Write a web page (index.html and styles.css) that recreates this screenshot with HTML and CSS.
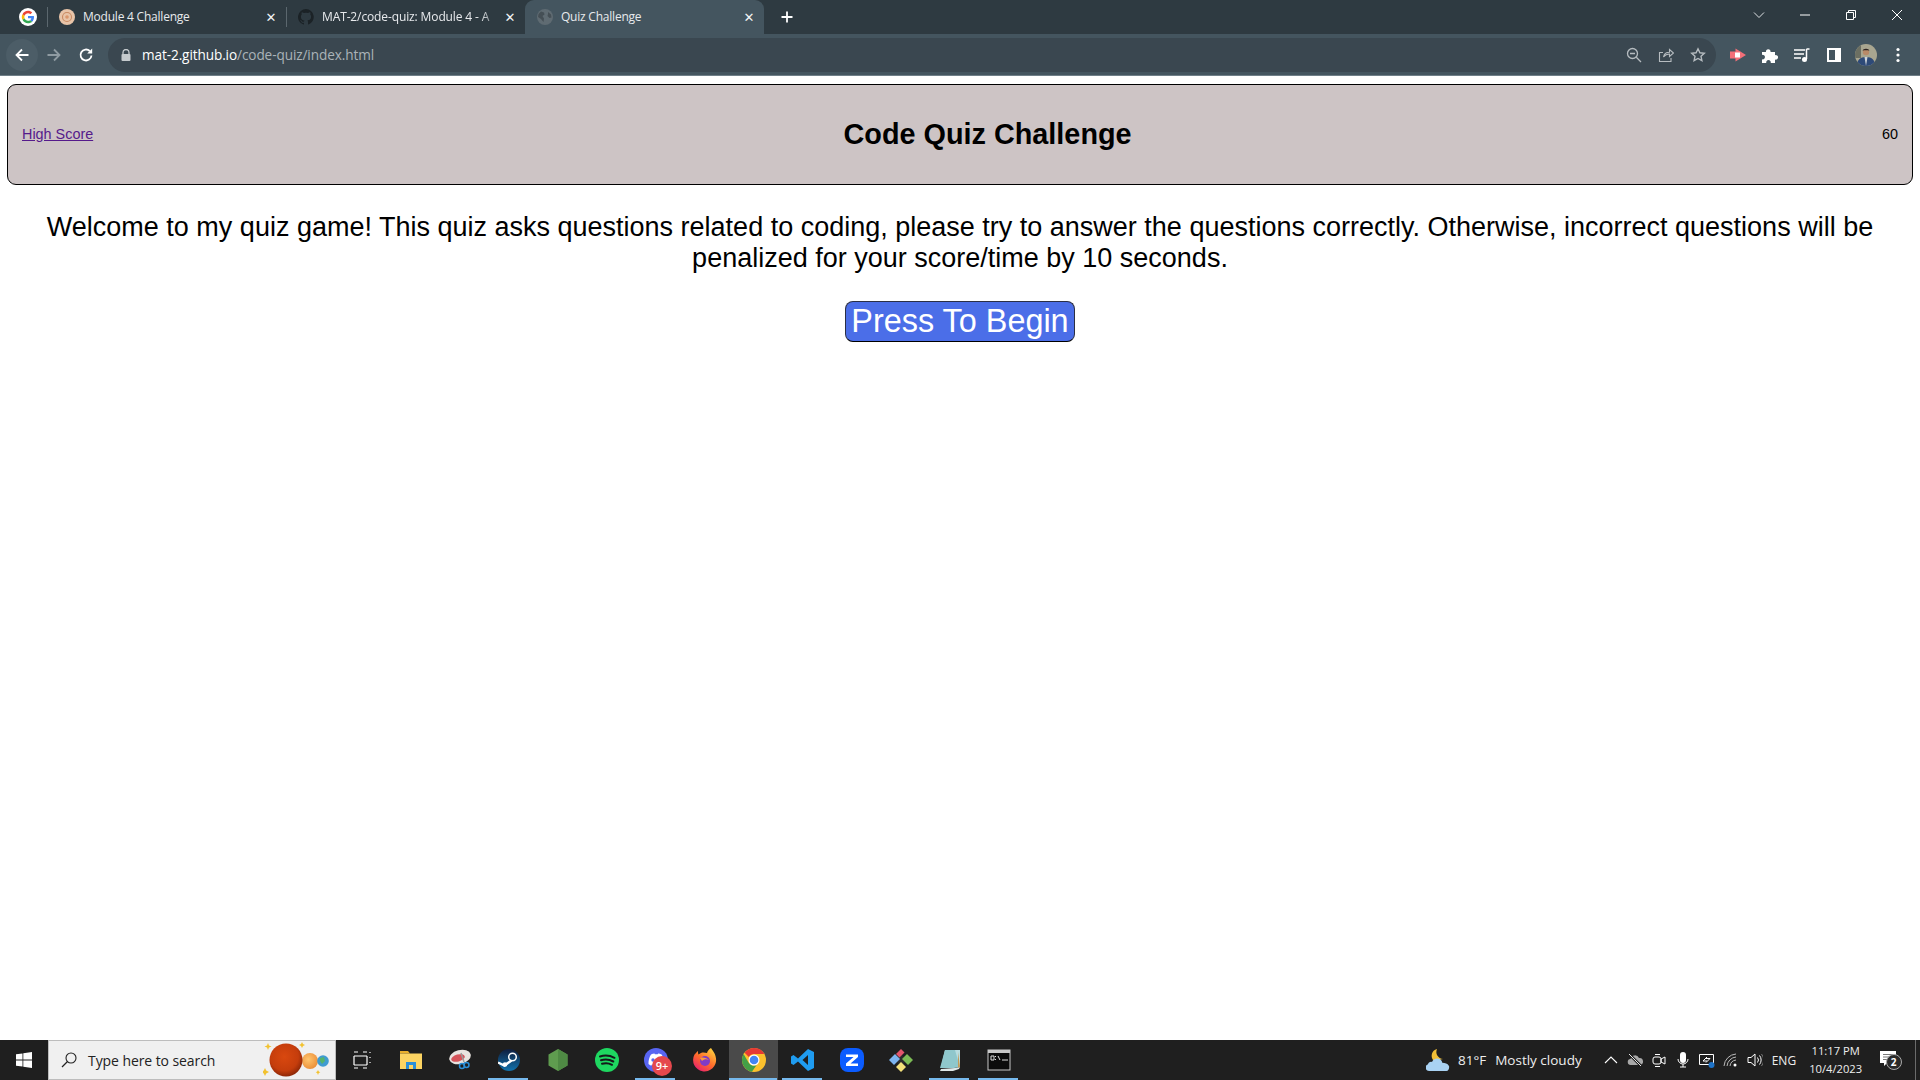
FILE: index.html
```html
<!DOCTYPE html>
<html lang="en">
<head>
<meta charset="utf-8">
<title>Quiz Challenge</title>
<link rel="stylesheet" href="styles.css">
</head>
<body>
<div class="screen">
  <div class="tabstrip">
    <div class="pinned">
      <svg class="fav18" viewBox="0 0 24 24"><circle cx="12" cy="12" r="12" fill="#fff"/><path d="M20 12.2c0-.6 0-1.100-.2-1.700H12v3.200h4.500c-.2 1-.8 1.900-1.700 2.500l2.700 2.100c1.600-1.500 2.500-3.600 2.500-6.100z" fill="#4285f4"/><path d="M12 20.300c2.200 0 4.100-.7 5.500-2l-2.700-2.100c-.8.5-1.700.8-2.800.8-2.100 0-3.900-1.400-4.600-3.400l-2.800 2.200c1.400 2.700 4.200 4.500 7.400 4.500z" fill="#34a853"/><path d="M7.400 13.600c-.4-1.100-.4-2.200 0-3.200L4.600 8.200c-1.200 2.300-1.200 5.200 0 7.600z" fill="#fbbc05"/><path d="M12 7c1.200 0 2.300.4 3.200 1.300l2.400-2.400C16.100 4.500 14.200 3.700 12 3.700c-3.200 0-6 1.800-7.400 4.500l2.800 2.200C8.100 8.400 9.900 7 12 7z" fill="#ea4335"/></svg>
    </div>
    <div class="tab-sep"></div>
    <div class="tab">
      <svg class="fav16" viewBox="0 0 16 16"><circle cx="8" cy="8" r="8" fill="#e8c4a8"/><circle cx="8" cy="8" r="4.500" fill="none" stroke="#c98a62" stroke-width="1.100"/><circle cx="8" cy="8" r="1.800" fill="#d9966c"/></svg>
      <span class="tab-title">Module 4 Challenge</span>
      <span class="tab-x">✕</span>
    </div>
    <div class="tab-sep"></div>
    <div class="tab">
      <svg class="fav16" viewBox="0 0 16 16"><path fill="#1b2226" d="M8 0a8 8 0 0 0-2.500 15.600c.4.100.5-.2.500-.4v-1.400c-2.200.5-2.700-1-2.700-1-.4-.9-.9-1.200-.9-1.200-.7-.5.100-.5.100-.5.800.100 1.200.8 1.200.8.700 1.200 1.900.9 2.300.7.100-.5.300-.9.500-1.100-1.800-.2-3.600-.9-3.600-4 0-.9.300-1.600.8-2.100-.1-.2-.4-1 .1-2.100 0 0 .7-.2 2.200.8a7.600 7.600 0 0 1 4 0c1.500-1 2.200-.8 2.200-.8.400 1.100.2 1.900.1 2.100.5.600.8 1.300.8 2.100 0 3.100-1.900 3.700-3.700 3.900.3.300.6.700.6 1.500v2.200c0 .2.100.5.500.4A8 8 0 0 0 8 0z"/></svg>
      <span class="tab-title tab-fade">MAT-2/code-quiz: Module 4 - A</span>
      <span class="tab-x">✕</span>
    </div>
    <div class="tab tab-active">
      <svg class="fav16" viewBox="0 0 16 16"><circle cx="8" cy="8" r="8" fill="#5f6b72"/><path d="M4 2.500l3 1 .5 2-2 1.500 1.500 2.500-.5 3.500-2.500-3L1 8l.5-3zM11 3l3 2.500.5 3-2 .5-2-2 .5-2z" fill="#454f55"/></svg>
      <span class="tab-title">Quiz Challenge</span>
      <span class="tab-x">✕</span>
    </div>
    <span class="newtab">
      <svg class="ic16" viewBox="0 0 16 16"><path d="M8 2.500v11M2.500 8h11" stroke="#fff" stroke-width="1.800" fill="none"/></svg>
    </span>
    <div class="winctl">
      <span class="winbtn"><svg class="ic12" viewBox="0 0 12 12"><path d="M1 3.500l5 5 5-5" stroke="#dfe3e5" fill="none"/></svg></span>
      <span class="winbtn"><svg class="ic12" viewBox="0 0 12 12"><path d="M1 6h10" stroke="#fff" fill="none"/></svg></span>
      <span class="winbtn"><svg class="ic12" viewBox="0 0 12 12"><path d="M1.500 3.500h7v7h-7zM3.500 3.500v-2h7v7h-2" stroke="#fff" fill="none"/></svg></span>
      <span class="winbtn"><svg class="ic12" viewBox="0 0 12 12"><path d="M1 1l10 10M11 1L1 11" stroke="#fff" fill="none"/></svg></span>
    </div>
  </div>

  <div class="toolbar">
    <div class="navs">
      <span class="navbtn nav-hover"><svg class="ic16" viewBox="0 0 16 16"><path d="M14.500 8H2.500M8 2.500L2.500 8 8 13.500" stroke="#fff" stroke-width="1.800" fill="none"/></svg></span>
      <span class="navbtn"><svg class="ic16" viewBox="0 0 16 16"><path d="M1.500 8h12M8 2.500L13.500 8 8 13.500" stroke="#8f9ba2" stroke-width="1.800" fill="none"/></svg></span>
      <span class="navbtn"><svg class="ic16" viewBox="0 0 16 16"><path d="M13.500 8.500A5.500 5.500 0 1 1 11.800 4" stroke="#fff" stroke-width="1.800" fill="none"/><path d="M14.200 1.500v5h-5z" fill="#fff"/></svg></span>
    </div>
    <div class="omnibox">
      <svg class="lock" viewBox="0 0 10 12"><path d="M2 5V3.500a3 3 0 0 1 6 0V5" stroke="#c5cacd" stroke-width="1.300" fill="none"/><rect x="0.500" y="5" width="9" height="7" rx="1" fill="#c5cacd"/></svg>
      <span class="url"><span class="url-host">mat-2.github.io</span>/code-quiz/index.html</span>
      <span class="omni-actions">
        <span class="omni-btn"><svg class="ic16" viewBox="0 0 16 16"><circle cx="6.500" cy="6.500" r="5" stroke="#b6bcc0" stroke-width="1.300" fill="none"/><path d="M4 6.500h5M10.300 10.300l4.700 4.700" stroke="#b6bcc0" stroke-width="1.300" fill="none"/></svg></span>
        <span class="omni-btn"><svg class="ic16" viewBox="0 0 16 16"><path d="M5.500 10c.5-3 3-4.800 6-4.800V2.500L15.500 6l-4 3.500V7c-2.500 0-4.500 1-6 3zM13 11v3.500H1.500V5.500H5" stroke="#b6bcc0" stroke-width="1.100" fill="none"/></svg></span>
        <span class="omni-btn"><svg class="ic16" viewBox="0 0 16 16"><path d="M8 1.800l1.900 4 4.400.5-3.300 3 .9 4.400L8 11.500l-3.900 2.200.9-4.400-3.300-3 4.400-.5z" stroke="#b6bcc0" stroke-width="1.400" fill="none"/></svg></span>
      </span>
    </div>
    <div class="tools">
      <span class="tool"><svg class="ic16" viewBox="0 0 16 16"><path d="M0 4.500h5.500V1.500L16 8 5.500 14.500v-3H0z" fill="#f36f78"/><rect x="5" y="5.500" width="5" height="5" fill="#fff"/></svg></span>
      <span class="tool"><svg class="ic16" viewBox="0 0 16 16"><path d="M0 5h4a2.300 2.300 0 1 1 4.500 0H13v3.200a2.300 2.300 0 1 1 0 4.300V16H8.700a2.300 2.300 0 1 0-4.400 0H0v-3.700a2.300 2.300 0 1 0 0-4.400z" fill="#fff"/></svg></span>
      <span class="tool"><svg class="ic16" viewBox="0 0 16 16"><path d="M0 3h11M0 7h10M0 11h7" stroke="#fff" stroke-width="1.300" fill="none"/><path d="M12.500 2h3M12.500 2v10" stroke="#fff" stroke-width="1.500" fill="none"/><circle cx="10.500" cy="12.500" r="2.500" fill="#fff"/></svg></span>
      <span class="tool"><svg class="ic16" viewBox="0 0 16 16"><path fill="#fff" fill-rule="evenodd" d="M1 1h14v14H1zM3 3v10h6V3z"/></svg></span>
      <span class="avatar"><svg class="ic22" viewBox="0 0 22 22"><defs><clipPath id="av"><circle cx="11" cy="11" r="11"/></clipPath></defs><g clip-path="url(#av)"><rect width="22" height="22" fill="#a9a690"/><rect x="0" y="0" width="6" height="14" fill="#6c6f62"/><path d="M2 22c0-6 3-9 9-9s9 3 9 9z" fill="#2e4a78"/><path d="M9.500 13l1.500 9 1.500-9z" fill="#cdd2d8"/><circle cx="11" cy="8" r="3.200" fill="#b98a68"/><path d="M7.700 7c0-3 6.600-3 6.600 0l-1-.8h-4.600z" fill="#2c2421"/></g></svg></span>
      <span class="tool"><svg class="ic16" viewBox="0 0 16 16"><circle cx="8" cy="2.500" r="1.600" fill="#fff"/><circle cx="8" cy="8" r="1.600" fill="#fff"/><circle cx="8" cy="13.500" r="1.600" fill="#fff"/></svg></span>
    </div>
  </div>

  <main class="page">
    <header class="card">
      <a class="score-link" href="#">High Score</a>
      <h1 class="title">Code Quiz Challenge</h1>
      <div class="timer">60</div>
    </header>
    <p class="intro">Welcome to my quiz game! This quiz asks questions related to coding, please try to answer the questions correctly. Otherwise, incorrect questions will be penalized for your score/time by 10 seconds.</p>
    <div class="start-row"><button class="start">Press To Begin</button></div>
  </main>

  <footer class="taskbar">
    <span class="start-menu"><svg class="ic16" viewBox="0 0 16 16"><path fill="#fff" d="M0 2.300l6.500-.9v6.200H0zM7.300 1.300L16 0v7.600H7.300zM0 8.400h6.500v6.200L0 13.700zM7.300 8.400H16V16l-8.700-1.200z"/></svg></span>
    <div class="search">
      <svg class="ic16" viewBox="0 0 16 16"><circle cx="10" cy="6" r="5" stroke="#222" stroke-width="1.100" fill="none"/><path d="M6.500 9.500L1 15" stroke="#222" stroke-width="1.300" fill="none"/></svg>
      <span class="search-text">Type here to search</span>
      <svg class="search-art" viewBox="0 0 70 40"><defs><radialGradient id="planet" cx="0.450" cy="0.400" r="0.650"><stop offset="0" stop-color="#d9480f"/><stop offset="0.650" stop-color="#c53d0c"/><stop offset="1" stop-color="#7f2206"/></radialGradient><radialGradient id="moon" cx="0.400" cy="0.400" r="0.700"><stop offset="0" stop-color="#ffc56e"/><stop offset="1" stop-color="#ea8a34"/></radialGradient></defs><path d="M5 3l1 2.500 2.500 1-2.500 1L5 10 4 7.500l-2.500-1 2.500-1zM39 2l1 2 2 1-2 1-1 2-1-2-2-1 2-1zM2 28l1.200 2.500L6 32l-2.800 1.500L2 36 .8 33.500-2 32l2.800-1.500zM55 30l.8 1.500 1.500.8-1.500.7L55 35l-.8-2-1.500-.7 1.500-.8z" fill="#f2c230"/><circle cx="47" cy="21" r="8" fill="url(#moon)"/><circle cx="60" cy="21" r="5.800" fill="#3f9bd1"/><path d="M57 18l4-1 1 4-3 3-2-3z" fill="#54b36c"/><circle cx="23" cy="20" r="16.500" fill="url(#planet)"/></svg>
    </div>
    <div class="apps">
      <span class="app"><svg class="ic18" viewBox="0 0 18 18"><path d="M1 1h4M1 5h13M1 5v9M14 5v9M1 14h13M1 17h4M10 1h4M10 17h4M17 1v1M17 6v1M17 11v1" stroke="#fff" stroke-width="1.200" fill="none"/></svg></span>
      <span class="app"><svg class="ic22" viewBox="0 0 22 22"><path d="M0 2h8l2 2.500H0z" fill="#eab02c"/><path d="M0 4.500h22V20H0z" fill="#fcd462"/><path d="M6 13h10v7H6z" fill="#2a8fd8"/><path d="M9 16h4v4H9z" fill="#fcd462"/></svg></span>
      <span class="app"><svg class="ic22" viewBox="0 0 22 22"><ellipse cx="11" cy="8" rx="11" ry="7" fill="#e9e4e0" transform="rotate(-15 11 8)"/><ellipse cx="9" cy="9" rx="7" ry="3.500" fill="#d6545a" transform="rotate(-15 9 9)"/><path d="M12 4l3 9" stroke="#999" stroke-width="1.500"/><circle cx="13" cy="17" r="2.500" stroke="#2a8fd8" stroke-width="1.500" fill="none"/><circle cx="17.500" cy="16" r="2.500" stroke="#2a8fd8" stroke-width="1.500" fill="none"/></svg></span>
      <span class="app app-on"><svg class="ic22" viewBox="0 0 22 22"><defs><linearGradient id="st" x1="0" y1="0" x2="0" y2="1"><stop offset="0" stop-color="#0f1d3d"/><stop offset="1" stop-color="#1273ad"/></linearGradient></defs><circle cx="11" cy="11" r="11" fill="url(#st)"/><path d="M0 13.500l6.500 3 7-5" stroke="#fff" stroke-width="2.400" fill="none"/><circle cx="14.500" cy="8" r="3.800" fill="none" stroke="#fff" stroke-width="1.500"/><circle cx="7" cy="15.500" r="2.300" fill="#fff"/></svg></span>
      <span class="app"><svg class="ic22" viewBox="0 0 22 22"><path d="M11 0l9.500 5.500v11L11 22l-9.500-5.500v-11z" fill="#5f9c4f"/><path d="M11 0l9.500 5.500v11L11 22z" fill="#4f8a44"/></svg></span>
      <span class="app"><svg class="ic24" viewBox="0 0 24 24"><circle cx="12" cy="12" r="12" fill="#1ed760"/><path d="M5 8.500c5-1.500 10-1 14.500 1.300M6 12.300c4.200-1.200 8.500-.8 12.300 1.200M7 15.800c3.500-1 7-.7 10 1" stroke="#15181a" stroke-width="2" stroke-linecap="round" fill="none"/></svg></span>
      <span class="app app-on"><svg class="ic24" viewBox="0 0 24 24"><circle cx="12" cy="12" r="12" fill="#5865f2"/><path d="M4.500 16c-.2-3.500.8-7 2.500-9.500 1.200-.6 2.400-.9 3.500-1l.4.800c1-.1 1.800-.1 2.800 0l.4-.8c1.200.1 2.300.4 3.500 1 1.700 2.500 2.700 6 2.500 9.500-1.300 1-2.500 1.500-3.800 1.800l-.8-1.300c-2.800.8-4.700.8-7.500 0l-.8 1.300C7 17.500 5.800 17 4.500 16z" fill="#fff"/><circle cx="9" cy="12" r="1.700" fill="#5865f2"/><circle cx="15" cy="12" r="1.700" fill="#5865f2"/></svg><span class="badge">9+</span></span>
      <span class="app"><svg class="ic24" viewBox="0 0 24 24"><defs><linearGradient id="ff" x1="0.800" y1="0" x2="0.100" y2="1"><stop offset="0" stop-color="#ffd13d"/><stop offset="0.500" stop-color="#ff6a2b"/><stop offset="1" stop-color="#e5147a"/></linearGradient></defs><path d="M18 0c1 2 4.500 5 5 10.500A11.500 11.500 0 1 1 1.500 6.500C3 5 4 3.500 5 3c-.2 1.500 0 2.500.5 3.500C8 4 11 4 14 5c.5-2 2-4 4-5z" fill="url(#ff)"/><circle cx="12" cy="13" r="5" fill="#7f3bc7"/><path d="M7 10c3-1 7 0 9 2-2-1-5-1-7 1z" fill="#ff9a3c"/></svg></span>
      <span class="app app-current"><svg class="ic24" viewBox="0 0 24 24"><circle cx="12" cy="12" r="12" fill="#fbc02d"/><path d="M12 0a12 12 0 0 1 10.400 6H12a6 6 0 0 0-5.200 3L2.600 4.800A12 12 0 0 1 12 0z" fill="#e53935"/><path d="M1.600 6a12 12 0 0 0 8.300 17.800L14.700 17A6 6 0 0 1 6.800 15z" fill="#43a047"/><circle cx="12" cy="12" r="5.500" fill="#fff"/><circle cx="12" cy="12" r="4.300" fill="#4285f4"/></svg></span>
      <span class="app app-on"><svg class="ic24" viewBox="0 0 24 24"><path d="M17 1l6 3v16l-6 3-10-9.500L2.500 17 0 15.500V8.500L2.500 7 7 10.500zM17 7l-5.500 5 5.500 5z" fill="#1f9cf0" fill-rule="evenodd"/></svg></span>
      <span class="app"><svg class="ic24" viewBox="0 0 24 24"><rect width="24" height="24" rx="8" fill="#0b5cff"/><path d="M6 6.500h12v2.500l-7.500 6.500H18V18H6v-2.500l7.500-6.500H6z" fill="#fff"/></svg></span>
      <span class="app"><svg class="ic24" viewBox="0 0 24 24"><path d="M12 6l6 6-6 6-6-6z" fill="#2b2b2b"/><path d="M7 6l5-5 3.500 3.500-5 5z" fill="#e2566c"/><path d="M0 12l6-6 5 5-6 6z" fill="#7db4f0"/><path d="M18 6l6 6-5 5-6-6z" fill="#7cbb55"/><path d="M12 24l-5-5 5-5 5 5z" fill="#f3e07a"/></svg></span>
      <span class="app app-on"><svg class="ic24" viewBox="0 0 24 24"><path d="M7 2h15v17H3z" fill="#b8dde0"/><path d="M7 2L2 20h14l6-1-5-17z" fill="#8fc7cc"/><path d="M3 21l14-1 5-1-1 2-6 2H2z" fill="#dfe7e8"/><path d="M20 4l2 15-2 .5z" fill="#c49a55"/></svg></span>
      <span class="app app-on"><svg class="ic24" viewBox="0 0 24 24"><rect x="1" y="2" width="22" height="20" fill="#0c0c0c" stroke="#c8c8c8"/><rect x="1" y="2" width="22" height="3" fill="#c8c8c8"/><path d="M4 8h3v4H4zM8.500 8v1M8.500 11v1M11 8l2 4M15 12h6" stroke="#ddd" fill="none"/></svg></span>
    </div>
    <div class="tray">
      <svg class="ic24" viewBox="0 0 24 24"><path d="M11 1a7 7 0 0 0-3 12l9-2a7 7 0 0 1-6-10z" fill="#f2c037"/><path d="M3 23a3.500 3.500 0 0 1-1-6.800c.3-2 2.500-3 4-2.300C7 11.500 9.500 10 12 10.500c2.500.4 4 2.200 4.300 4.300 3 0 5 .6 6.700 3.200.6 2-.5 5-2.500 5z" fill="#a9d2f3"/></svg>
      <span class="tray-temp">81°F</span>
      <span class="tray-weather">Mostly cloudy</span>
      <span class="tray-icons">
        <span class="tray-i"><svg class="ic16" viewBox="0 0 16 16"><path d="M2 11l6-6 6 6" stroke="#fff" stroke-width="1.100" fill="none"/></svg></span>
        <span class="tray-i"><svg class="ic16" viewBox="0 0 16 16"><path d="M4 13a3 3 0 0 1-.5-6 4.500 4.500 0 0 1 8.500-1 3.500 3.500 0 0 1 1 7z" fill="#a8a8a8"/><path d="M2 2l12 12" stroke="#1f1f1f" stroke-width="2.500"/><path d="M2 2l12 12" stroke="#e8e8e8"/></svg></span>
        <span class="tray-i"><svg class="ic16" viewBox="0 0 16 16"><rect x="2" y="5" width="8" height="7" rx="2" stroke="#fff" fill="none"/><path d="M10 7l4-2v7l-4-2zM4 2.500h5M4 14.500h5" stroke="#fff" fill="none"/></svg></span>
        <span class="tray-i"><svg class="ic16" viewBox="0 0 16 16"><rect x="5" y="0" width="6" height="11" rx="3" fill="#fff"/><path d="M3 7a5 5 0 0 0 10 0M8 12v3M5 15h6" stroke="#fff" fill="none"/></svg></span>
        <span class="tray-i"><svg class="ic16" viewBox="0 0 16 16"><path d="M.5 2.500h14v10H.5z" stroke="#fff" fill="none"/><path d="M8 5L4 9h4M7 10.500l4-4H7" stroke="#fff" fill="none"/><circle cx="12.500" cy="13" r="3" fill="#1e73c8"/></svg></span>
        <span class="tray-i"><svg class="ic16" viewBox="0 0 16 16"><path d="M1 14a13 13 0 0 1 12-12M4 14a10 10 0 0 1 9-9M7 14a7 7 0 0 1 6-6" stroke="#bbb" fill="none"/><circle cx="12" cy="13" r="1.500" fill="#fff"/></svg></span>
        <span class="tray-i"><svg class="ic16" viewBox="0 0 16 16"><path d="M1 5.500h3L8 2v12L4 10.500H1z" stroke="#fff" fill="none"/><path d="M10.500 5.500a4 4 0 0 1 0 5M12.500 3.500a7 7 0 0 1 0 9" stroke="#fff" fill="none"/><path d="M14.500 2a10 10 0 0 1 0 12" stroke="#777" fill="none"/></svg></span>
      </span>
      <span class="tray-lang">ENG</span>
      <span class="clock"><span>11:17 PM</span><span>10/4/2023</span></span>
      <span class="notif"><svg class="ic24" viewBox="0 0 24 24"><path d="M1 3h16v12H8l-3 3v-3H1z" fill="#fff"/><path d="M4 6.500h10M4 9h10M4 11.500h7" stroke="#777"/></svg><span class="notif-n">2</span></span>
      <span class="show-desktop"></span>
    </div>
  </footer>
</div>
</body>
</html>
```

FILE: styles.css
```css
* { box-sizing: border-box; }
html, body { margin: 0; height: 100%; }
body { font-family: "Liberation Sans", Arial, sans-serif; background: #fff; color: #000; overflow: hidden; }
svg { display: block; flex: none; }
.screen { height: 100vh; display: flex; flex-direction: column; }

.fav16, .ic16 { width: 16px; height: 16px; }
.fav18, .ic18 { width: 18px; height: 18px; }
.ic12 { width: 12px; height: 12px; }
.ic22 { width: 22px; height: 22px; }
.ic24 { width: 24px; height: 24px; }

/* browser chrome */
.tabstrip { height: 34px; background: #2e3a41; display: flex; align-items: center; font-family: "Open Sans", sans-serif; flex: none; }
.pinned { width: 47px; height: 34px; padding-left: 19px; display: flex; align-items: center; }
.tab-sep { width: 1px; height: 20px; background: #5b676e; flex: none; }
.tab { width: 238px; height: 34px; padding: 0 7px 0 11px; display: flex; align-items: center; color: #e8eaed; }
.tab-active { background: #44555f; border-radius: 9px 9px 0 0; width: 239px; padding-left: 12px; }
.tab-title { flex: 1; margin-left: 8px; padding-bottom: 2px; font-size: 12px; white-space: nowrap; overflow: hidden; letter-spacing: -0.22px; }
.tab-fade { -webkit-mask-image: linear-gradient(to right, #000 88%, transparent 100%); mask-image: linear-gradient(to right, #000 88%, transparent 100%); letter-spacing: -0.12px; }
.tab-x { width: 16px; font-size: 13px; text-align: center; color: #f1f3f4; font-family: "DejaVu Sans", sans-serif; }
.newtab { width: 46px; display: flex; justify-content: center; }
.winctl { margin-left: auto; display: flex; }
.winbtn { width: 46px; height: 30px; display: flex; align-items: center; justify-content: center; margin-bottom: 4px; }

.toolbar { height: 42px; background: #44555f; display: flex; align-items: center; border-bottom: 1px solid #6f7f88; flex: none; }
.navs { display: flex; width: 108px; padding-left: 6px; }
.navbtn { width: 32px; height: 32px; display: flex; align-items: center; justify-content: center; border-radius: 50%; }
.nav-hover { background: #4c5d67; }
.omnibox { width: 1608px; height: 34px; border-radius: 17px; background: #3a4750; display: flex; align-items: center; padding-left: 13px; color: #aab3b8; font-family: "Open Sans", sans-serif; font-size: 13.600px; }
.lock { width: 10px; height: 12px; }
.url { margin-left: 11px; letter-spacing: -0.1px; }
.url-host { color: #fff; }
.omni-actions { margin-left: auto; display: flex; padding-right: 2px; }
.omni-btn { width: 32px; display: flex; justify-content: center; }
.tools { display: flex; align-items: center; flex: 1; padding-left: 6px; }
.tool { width: 32px; display: flex; justify-content: center; }
.avatar { width: 32px; display: flex; justify-content: center; }

/* page */
.page { flex: 1; min-height: 0; padding: 8px 7px 0; }
.card { height: 101px; background: #cdc4c5; border: 1px solid #000; border-radius: 9px; padding: 0 14px; display: flex; align-items: center; justify-content: space-between; font-size: 14.400px; }
.score-link { color: #551a8b; padding-bottom: 2px; }
.timer { padding-bottom: 2px; }
.title { font-size: 28.800px; margin: 0; font-weight: bold; }
.intro { font-size: 27px; line-height: 31px; text-align: center; margin: 27px 0 27px; }
.start-row { display: flex; justify-content: center; }
.start { width: 230px; height: 41px; padding: 0; background: #4b6ee8; color: #fff; border: 1px solid #2b2f45; border-bottom-color: #000; border-radius: 8px; font-family: "Liberation Sans", Arial, sans-serif; font-size: 32.400px; line-height: 1; }

/* taskbar */
.taskbar { height: 40px; background: #1f1f1f; display: flex; align-items: center; color: #fff; font-family: "Open Sans", sans-serif; flex: none; }
.start-menu { width: 48px; display: flex; justify-content: center; }
.search { width: 288px; height: 40px; background: #f0f0f0; border: 1px solid #bdbdbd; padding: 0 2px 0 12px; display: flex; align-items: center; color: #222; }
.search-text { margin-left: 11px; font-size: 14px; flex: 1; letter-spacing: -0.08px; }
.search-art { width: 70px; height: 40px; }
.apps { display: flex; height: 40px; margin-left: 1px; }
.app { position: relative; width: 49px; height: 40px; display: flex; align-items: center; justify-content: center; }
.app-on::after, .app-current::after { content: ""; position: absolute; left: 4px; right: 5px; bottom: 0; height: 2px; background: #76b9ed; }
.app-current { background: #4a4a4a; }
.app-current::after { left: 0; right: 1px; }
.badge { position: absolute; left: 21px; top: 16px; width: 20px; height: 20px; border-radius: 50%; background: #e5484d; color: #fff; font-size: 11px; line-height: 20px; text-align: center; font-weight: 600; }
.tray { flex: 1; display: flex; align-items: center; padding-left: 403px; }
.tray-temp { margin-left: 8px; font-size: 13.500px; color: #eee; }
.tray-weather { margin-left: 9px; font-size: 13.500px; color: #eee; }
.tray-icons { display: flex; margin-left: 17px; }
.tray-i { width: 24px; display: flex; justify-content: center; }
.tray-lang { margin-left: 5px; font-size: 12px; width: 28px; color: #eee; }
.clock { display: flex; flex-direction: column; align-items: center; width: 60px; margin-left: 6px; font-size: 11.200px; line-height: 18px; color: #eee; }
.notif { position: relative; margin-left: 13px; width: 24px; }
.notif-n { position: absolute; left: 7px; top: 6px; width: 16px; height: 16px; border-radius: 50%; background: #2a2a2a; border: 1px solid #aaa; font-size: 10px; line-height: 14px; text-align: center; font-weight: 700; }
.show-desktop { margin-left: auto; width: 1px; height: 40px; background: #6b6b6b; margin-right: 4px; }
```
